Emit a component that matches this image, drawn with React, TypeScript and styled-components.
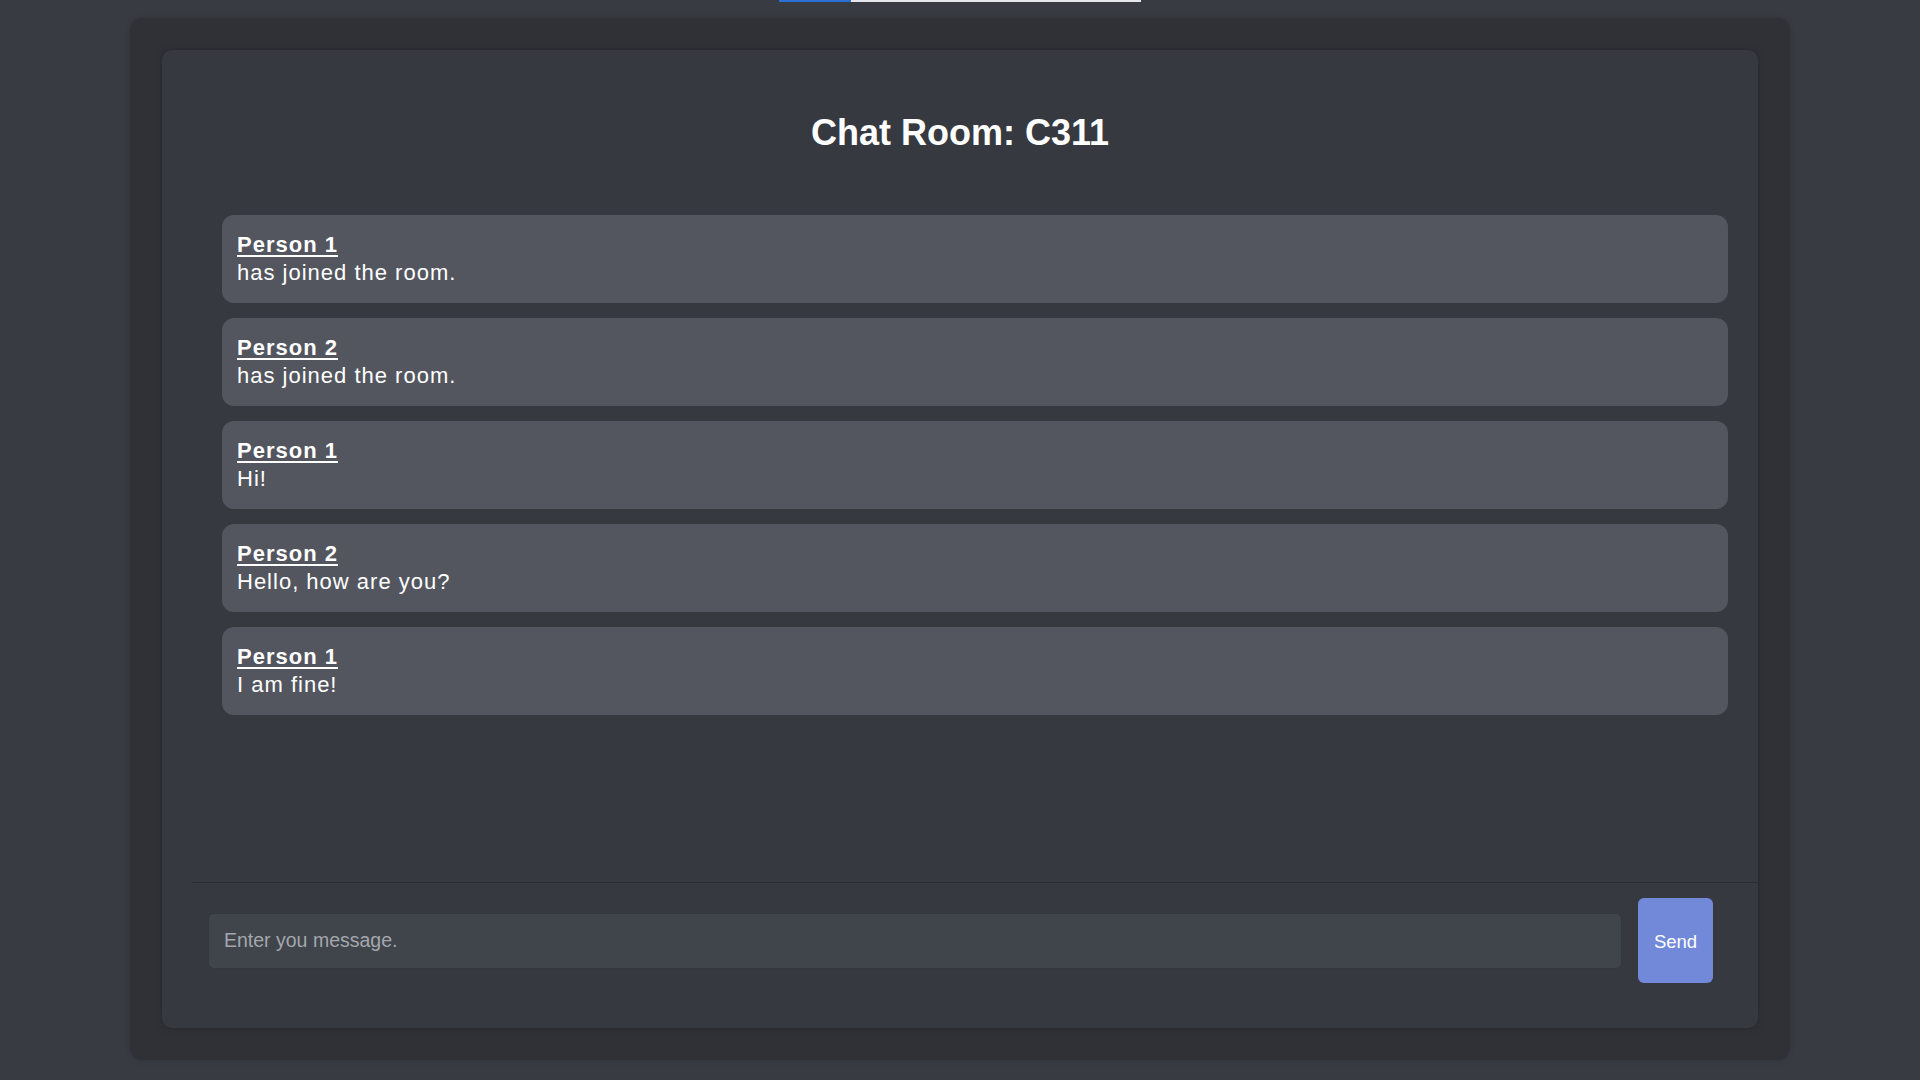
import React from "react";
import styled, { createGlobalStyle } from "styled-components";

const GlobalStyle = createGlobalStyle`
  html, body {
    margin: 0;
    padding: 0;
    background: #383b42;
    font-family: "Liberation Sans", Arial, sans-serif;
    color: #ffffff;
  }
  * { box-sizing: border-box; }
`;

const Page = styled.div`
  width: 1920px;
  height: 1080px;
  display: flex;
  flex-direction: column;
  align-items: center;
`;

const Progress = styled.div`
  width: 362px;
  height: 2px;
  display: flex;
  background: #e6e7ea;
`;

const ProgressFill = styled.div`
  height: 100%;
  background: #2d6fd4;
`;

const Outer = styled.div`
  margin-top: 16px;
  width: 1660px;
  height: 1042px;
  padding: 32px;
  background: #2f3136;
  border-radius: 12px;
  box-shadow: 0 0 6px rgba(0, 0, 0, 0.15);
`;

const Card = styled.div`
  height: 100%;
  display: flex;
  flex-direction: column;
  background: #363940;
  border-radius: 10px;
  box-shadow: 0 0 8px rgba(0, 0, 0, 0.18);
`;

const Header = styled.header`
  height: 165px;
  display: flex;
  align-items: center;
  justify-content: center;
`;

const Title = styled.h1`
  margin: 0;
  font-size: 36px;
  line-height: 41px;
  font-weight: 700;
  color: #ffffff;
`;

const Body = styled.div`
  flex: 1;
  display: flex;
  flex-direction: column;
  padding-left: 30px;
  min-height: 0;
`;

const MessageList = styled.div`
  flex: 1;
  display: flex;
  flex-direction: column;
  gap: 15px;
  padding: 0 30px;
  overflow: hidden;
`;

const Message = styled.div`
  background: #53565f;
  border-radius: 12px;
  padding: 16px 15px;
  font-size: 22px;
  line-height: 28px;
  letter-spacing: 1px;
  color: #ffffff;
`;

const Author = styled.div`
  font-weight: 700;
  text-decoration: underline;
  text-underline-offset: 3px;
`;

const Text = styled.div``;

const Footer = styled.form`
  border-top: 1px solid #2c2e33;
  padding: 15px 45px 45px 16px;
  display: flex;
  align-items: center;
  gap: 16px;
`;

const Input = styled.input`
  flex: 1;
  height: 56px;
  padding: 0 15px;
  background: #40444b;
  border: 1px solid #34373d;
  border-radius: 6px;
  color: #ffffff;
  font-family: "Liberation Sans", Arial, sans-serif;
  font-size: 19.5px;
  outline: none;
  &::placeholder {
    color: #a4a7ad;
  }
`;

const SendButton = styled.button`
  width: 75px;
  height: 85px;
  padding: 2px 0 0;
  background: #7289da;
  border: none;
  border-radius: 6px;
  color: #ffffff;
  font-family: "Liberation Sans", Arial, sans-serif;
  font-size: 18.5px;
  cursor: pointer;
`;

const messages = [
  { author: "Person 1", text: "has joined the room." },
  { author: "Person 2", text: "has joined the room." },
  { author: "Person 1", text: "Hi!" },
  { author: "Person 2", text: "Hello, how are you?" },
  { author: "Person 1", text: "I am fine!" },
];

export default function App() {
  return (
    <>
      <GlobalStyle />
      <Page>
        <Progress>
          <ProgressFill style={{ width: "20%" }} />
        </Progress>
        <Outer>
          <Card>
            <Header>
              <Title>Chat Room: C311</Title>
            </Header>
            <Body>
              <MessageList>
                {messages.map((m, i) => (
                  <Message key={i}>
                    <Author>{m.author}</Author>
                    <Text>{m.text}</Text>
                  </Message>
                ))}
              </MessageList>
              <Footer onSubmit={(e) => e.preventDefault()}>
                <Input placeholder="Enter you message." />
                <SendButton type="submit">Send</SendButton>
              </Footer>
            </Body>
          </Card>
        </Outer>
      </Page>
    </>
  );
}
